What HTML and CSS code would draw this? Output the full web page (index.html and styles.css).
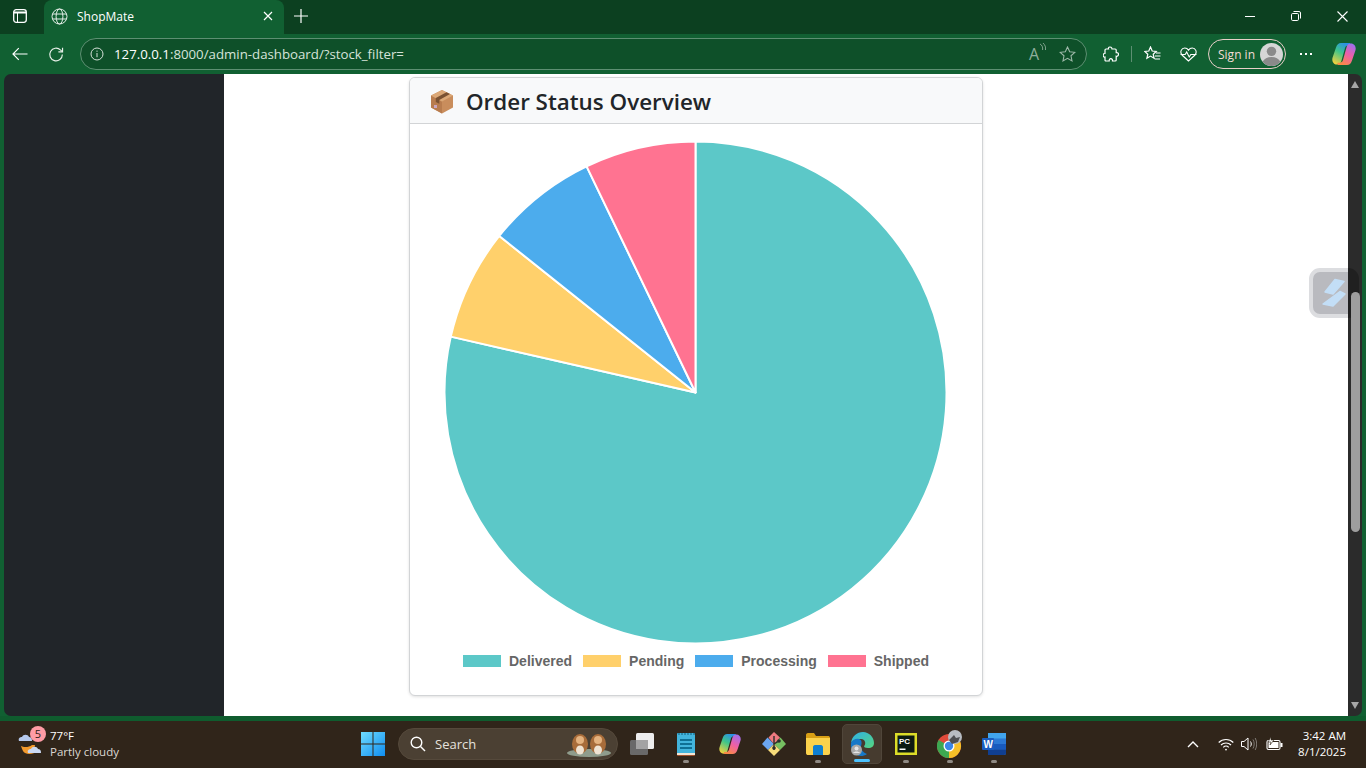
FILE: index.html
```html
<!DOCTYPE html>
<html lang="en">

<head>
    <meta charset="UTF-8">
    <meta name="viewport" content="width=device-width, initial-scale=1.0">
    <title>ShopMate</title>
    <link rel="stylesheet" href="styles.css">
</head>

<body>
    <div class="tabstrip">
        <div class="tab-actions">
            <svg width="16" height="16" viewBox="0 0 16 16" fill="none" stroke="#fff" stroke-width="1.300"><rect x="1.700" y="1.700" width="12.600" height="12.600" rx="2.500"/><path d="M1.700 4.500h12.600" stroke-width="2"/><path d="M5.500 5v9" stroke-width="1"/></svg>
        </div>
        <div class="tab">
            <svg width="17" height="17" viewBox="0 0 17 17" fill="none" stroke="#e6efe9" stroke-width="1"><circle cx="8.500" cy="8.500" r="7.500"/><ellipse cx="8.500" cy="8.500" rx="3.400" ry="7.500"/><path d="M1.400 6h14.200M1.400 11h14.200"/></svg>
            <span class="tab-title">ShopMate</span>
            <svg width="10" height="10" viewBox="0 0 10 10" stroke="#fff" stroke-width="1.200"><path d="M1 1l8 8M9 1l-8 8"/></svg>
        </div>
        <svg class="tab-new" width="14" height="14" viewBox="0 0 14 14" stroke="#fff" stroke-width="1.200"><path d="M7 0v14M0 7h14"/></svg>
        <div class="win-buttons">
            <svg width="10" height="10" viewBox="0 0 10 10" stroke="#fff" stroke-width="1"><path d="M0 5.500h10"/></svg>
            <svg width="10" height="10" viewBox="0 0 10 10" fill="none" stroke="#fff" stroke-width="1"><rect x=".5" y="2.500" width="7" height="7" rx="1.200"/><path d="M2.500 .5h5.500a1.500 1.500 0 0 1 1.500 1.500v5.500"/></svg>
            <svg width="11" height="11" viewBox="0 0 11 11" stroke="#fff" stroke-width="1.100"><path d="M.5 .5l10 10M10.500 .5l-10 10"/></svg>
        </div>
    </div>

    <div class="toolbar">
        <svg width="16" height="14" viewBox="0 0 16 14" fill="none" stroke="#fff" stroke-width="1.200"><path d="M16 7H1M7 1L1 7l6 6"/></svg>
        <svg class="reload" width="17" height="17" viewBox="0 0 17 17" fill="none" stroke="#e8efe9" stroke-width="1.200"><path d="M14.800 8.500a6.500 6.500 0 1 1-2-4.700L15 5.800"/><path d="M15 1.500v4.300h-4.300"/></svg>
        <div class="addressbar">
            <svg width="14" height="14" viewBox="0 0 14 14" fill="none" stroke="#d5e0d8" stroke-width="1"><circle cx="7" cy="7" r="6"/><path d="M7 6v4.200M7 3.600v1.200"/></svg>
            <span class="url"><b>127.0.0.1</b>:8000/admin-dashboard/?stock_filter=</span>
            <span class="read-aloud">A<svg width="7" height="9" viewBox="0 0 7 9" fill="none" stroke="#8fae9b" stroke-width=".9"><path d="M1 1c2 1 3 3 2.600 6M4 0c2 2 3 4 2.500 7"/></svg></span>
            <svg width="17" height="16" viewBox="0 0 17 16" fill="none" stroke="#9db8a8" stroke-width="1.100"><path d="M8.500 1l2.200 4.700 5.100.6-3.800 3.500 1 5.100-4.500-2.600-4.500 2.600 1-5.100L1.200 6.300l5.100-.6z"/></svg>
        </div>
        <div class="tools">
            <svg width="16" height="17" viewBox="0 0 16 17" fill="none" stroke="#fff" stroke-width="1.200"><path d="M6 1.200c1.400-.6 3 .3 3 1.800h3.200c.6 0 1 .4 1 1v2.600c1.800-.3 2.500 1 2.200 2.200-.3 1.200-1.200 1.800-2.200 1.400V14c0 .6-.4 1-1 1H9.500c.2-1.600-.7-2.300-1.700-2.300S6 13.500 6.200 15H3c-.6 0-1-.4-1-1v-3c-1.500.4-1.800-.8-1.800-1.800S1 7 2 7.300V4c0-.6.400-1 1-1h2.500c-.2-.7 0-1.500.5-1.800z"/></svg>
            <span class="tool-sep"></span>
            <svg width="17" height="16" viewBox="0 0 17 16" fill="none" stroke="#fff" stroke-width="1.200"><path d="M6.500 1l1.700 4 4 .4-3 2.800.9 4.100-3.600-2.200-3.600 2.200.9-4.100-3-2.800 4-.4zM12 7h4.500M11 10h5.500M10.500 13H16"/></svg>
            <svg class="tool-health" width="17" height="15" viewBox="0 0 17 15" fill="none" stroke="#fff" stroke-width="1.100"><path d="M8.500 14L2 8C-.5 5 1.500 1 4.700 1c1.700 0 3 .8 3.800 2.200C9.300 1.800 10.600 1 12.300 1 15.500 1 17.500 5 15 8zM.5 7.500h4.700l1.500-2.500 2.500 5 1.600-2.500h5.700"/></svg>
            <div class="signin">
                <span>Sign in</span>
                <span class="avatar">
                    <svg width="23" height="23" viewBox="0 0 22 22"><circle cx="11" cy="11" r="11" fill="#d6d6d6"/><circle cx="11" cy="8" r="4.500" fill="#8a8a8a"/><path d="M2.500 18c1.500-3 4.500-4.500 8.500-4.500s7 1.500 8.500 4.500A11 11 0 0 1 11 22a11 11 0 0 1-8.500-4z" fill="#8a8a8a"/></svg>
                </span>
            </div>
            <span class="dots"><i></i><i></i><i></i></span>
            <svg class="copilot" width="24" height="24" viewBox="0 0 24 24">
                <defs>
                    <linearGradient id="cpa" x1=".7" y1="0" x2=".2" y2="1"><stop offset="0" stop-color="#2a8fe8"/><stop offset=".45" stop-color="#3ec58a"/><stop offset="1" stop-color="#f4d13d"/></linearGradient>
                    <linearGradient id="cpb" x1=".8" y1="0" x2=".3" y2="1"><stop offset="0" stop-color="#9c6fee"/><stop offset=".5" stop-color="#ee5fa7"/><stop offset="1" stop-color="#f98a45"/></linearGradient>
                </defs>
                <path d="M9 1h8c1.500 0 2 1.200 1.300 2.200C15 3 13.500 4 13 6L9.500 18.500C9 21 7.500 22.500 5 22.500 1.500 22.500-.5 19 .6 15.500L4 5.500C5 2.500 6.500 1 9 1z" fill="url(#cpa)"/>
                <path d="M15 23H7c-1.500 0-2-1.200-1.300-2.200C9 21 10.500 20 11 18l3.500-12.500C15 3 16.500 1.500 19 1.500c3.500 0 5.500 3.500 4.400 7L20 18.500C19 21.500 17.500 23 15 23z" fill="url(#cpb)"/>
            </svg>
        </div>
    </div>

    <div class="window-body">
        <aside class="sidebar"></aside>
        <main class="main">
            <section class="card">
                <header class="card-header">
                    <svg class="box-icon" width="24" height="25" viewBox="0 0 24 25">
                        <path d="M12 1L23 6.500V18.500L12 24.500 1 18.500V6.500z" fill="#c98d5c"/>
                        <path d="M1 6.500L12 12.500V24.500L1 18.500z" fill="#b87c4e"/>
                        <path d="M12 1L23 6.500 12 12.500 1 6.500z" fill="#dba877"/>
                        <path d="M16.500 3.200L5.800 9.100V13l3.500 1.800v-3.900L20 5z" fill="#7a5232"/>
                        <rect x="4" y="16" width="3" height="3" fill="#c9a6c0"/>
                    </svg>
                    <h2 class="card-title">Order Status Overview</h2>
                </header>
                <div class="chart">
                    <svg class="pie" width="504" height="504" viewBox="-251.500 -252.500 504 504">
                        <g stroke="#fff" stroke-width="2" stroke-linejoin="round">
                            <path d="M0 0L0 -251A251 251 0 1 1 -244.700 -55.850Z" fill="#5cc8c8"/>
                            <path d="M0 0L-244.700 -55.850A251 251 0 0 1 -196.240 -156.500Z" fill="#ffd06b"/>
                            <path d="M0 0L-196.240 -156.500A251 251 0 0 1 -108.900 -226.140Z" fill="#4caced"/>
                            <path d="M0 0L-108.900 -226.140A251 251 0 0 1 0 -251Z" fill="#ff7391"/>
                        </g>
                    </svg>
                    <ul class="legend">
                        <li><span class="swatch swatch-teal"></span>Delivered</li>
                        <li><span class="swatch swatch-yellow"></span>Pending</li>
                        <li><span class="swatch swatch-blue"></span>Processing</li>
                        <li><span class="swatch swatch-pink"></span>Shipped</li>
                    </ul>
                </div>
            </section>
            <div class="float-widget">
                <svg width="26" height="30" viewBox="0 0 26 30" fill="#c3def6" stroke="#c3def6" stroke-width="1.500" stroke-linejoin="round"><path d="M14 1.500l9 2-11 12.500-8-2z"/><path d="M19 13.500l5 2.500-12 12-10-2z"/></svg>
            </div>
        </main>
        <div class="scrollbar">
            <span class="arrow-up"></span>
            <span class="thumb"></span>
            <span class="arrow-down"></span>
        </div>
    </div>

    <div class="taskbar">
        <div class="weather">
            <svg width="30" height="30" viewBox="0 0 30 30">
                <path d="M4 17c2 1 7 2 11-1l3 0c-1 3 0 5 2 6-3 3-8 4-12 2-2-1-3-4-4-7z" fill="#f39a2d"/>
                <path d="M2 12c-1-3 1-4 3-4 1-3 6-3 7 0 2 0 3 1 3 4z" fill="#b6c9ec"/>
                <path d="M11 24c-1-3 1-4 3-4 1-3 6-3 7 0 2 0 3 1 3 4z" fill="#c9d8f2"/>
            </svg>
            <span class="badge">5</span>
            <div class="weather-text">
                <span>77°F</span>
                <span class="cond">Partly cloudy</span>
            </div>
        </div>
        <div class="task-icon">
            <svg width="24" height="24" viewBox="0 0 24 24"><defs><linearGradient id="win" x1="0" y1="0" x2="1" y2="1"><stop offset="0" stop-color="#6fdcff"/><stop offset="1" stop-color="#0f8df0"/></linearGradient></defs><path d="M0 0h11.500v11.500H0zM12.500 0H24v11.500H12.500zM0 12.500h11.500V24H0zM12.500 12.500H24V24H12.500z" fill="url(#win)"/></svg>
        </div>
        <div class="searchbox">
            <svg width="16" height="16" viewBox="0 0 16 16" fill="none" stroke="#fff" stroke-width="1.400"><circle cx="6.500" cy="6.500" r="5.300"/><path d="M10.500 10.500L15 15"/></svg>
            <span class="search-label">Search</span>
            <svg width="46" height="26" viewBox="0 0 46 26">
                <ellipse cx="23" cy="22" rx="22" ry="4" fill="#8f9c8c"/>
                <ellipse cx="14" cy="13" rx="8" ry="10" fill="#a86c3a"/><ellipse cx="32" cy="13" rx="8" ry="10" fill="#a86c3a"/>
                <ellipse cx="14" cy="9" rx="4" ry="4" fill="#e4b27f"/><ellipse cx="32" cy="9" rx="4" ry="4" fill="#e4b27f"/>
                <ellipse cx="14" cy="19" rx="4" ry="4.500" fill="#efe3d3"/><ellipse cx="32" cy="19" rx="4" ry="4.500" fill="#efe3d3"/>
            </svg>
        </div>
        <div class="task-icon">
            <svg width="24" height="22" viewBox="0 0 24 22"><rect x="0" y="7" width="18" height="15" rx="1.500" fill="#696969"/><rect x="6" y="0" width="18" height="16" rx="1.500" fill="#ededed"/><rect x="6" y="7" width="12" height="9" fill="#a3a3a3"/></svg>
        </div>
        <div class="task-icon has-dot">
            <svg width="18" height="24" viewBox="0 0 18 24"><rect x="0" y="2" width="18" height="22" rx="1" fill="#a0522d"/><rect x="0" y="1" width="18" height="21" rx="1" fill="#42b4dc"/><path d="M3 8h12M3 12h12M3 16h12" stroke="#0f6f94" stroke-width="2"/><path d="M2 1v2M5 1v2M8 1v2M11 1v2M14 1v2M17 1v2" stroke="#0f5f7f" stroke-width="1"/><rect x="0" y="21" width="18" height="2" fill="#f1e6d6"/></svg>
        </div>
        <div class="task-icon">
            <svg width="22" height="22" viewBox="0 0 24 24"><path d="M9 1h8c1.500 0 2 1.200 1.300 2.200C15 3 13.500 4 13 6L9.500 18.500C9 21 7.500 22.500 5 22.500 1.500 22.500-.5 19 .6 15.500L4 5.500C5 2.500 6.500 1 9 1z" fill="url(#cpa)"/><path d="M15 23H7c-1.500 0-2-1.200-1.300-2.200C9 21 10.500 20 11 18l3.500-12.500C15 3 16.500 1.500 19 1.500c3.500 0 5.500 3.500 4.400 7L20 18.500C19 21.500 17.500 23 15 23z" fill="url(#cpb)"/></svg>
        </div>
        <div class="task-icon">
            <svg width="24" height="24" viewBox="0 0 24 24"><path d="M12 12L5.500 5.500 0 12l6 6z" fill="#6aa5f0"/><path d="M12 12l6.500-6.500L24 12l-6 6z" fill="#76c061"/><path d="M12 12l6 6-6 6-6-6z" fill="#f7dc7a"/><path d="M12 12L6.500 5.500 12 0l6 5.500z" fill="#ee7a80"/><path d="M12 4v14M12 12l5-3" stroke="#2c2c2c" stroke-width="1.400"/><circle cx="12" cy="16" r="1.800" fill="#2c2c2c"/><circle cx="17" cy="9" r="1.800" fill="#2c2c2c"/></svg>
        </div>
        <div class="task-icon has-dot">
            <svg width="24" height="22" viewBox="0 0 24 22"><path d="M0 2c0-1 .6-2 2-2h6l2 3h12c1 0 2 .6 2 2v2H0z" fill="#d89f15"/><path d="M0 5h24v15c0 1-.6 2-2 2H2c-1 0-2-.6-2-2z" fill="#fbd24c"/><path d="M7 14c0-1 .6-2 2-2h6c1 0 2 1 2 2v8H7z" fill="#0f7fd0"/></svg>
        </div>
        <div class="task-icon task-icon-active">
            <svg width="24" height="24" viewBox="0 0 24 24">
                <defs><linearGradient id="edg" x1="0" y1="0" x2="1" y2="1"><stop offset="0" stop-color="#2fb0e8"/><stop offset="1" stop-color="#55d67f"/></linearGradient></defs>
                <path d="M1 11C2 4 7 0 13 0c6 0 11 5 11 11 0 3-2 5-6 5-3 0-4-1-4-2 2-1 2-7-3-7-5 0-9 2-10 4z" fill="url(#edg)"/>
                <path d="M1 11c1-3 5-5 8-4 3 1 3 4 2 7-1 2 1 6 6 8-2 1.500-4 2-6 2C5 24 0 18 1 11z" fill="#1678c8"/>
                <circle cx="6.500" cy="18" r="5.500" fill="#a8a8a8"/><circle cx="6.500" cy="16.500" r="2" fill="#e5e5e5"/><path d="M3 21c1-2 6-2 7 0z" fill="#e5e5e5"/>
            </svg>
            <span class="active-bar"></span>
        </div>
        <div class="task-icon has-dot">
            <svg width="22" height="22" viewBox="0 0 22 22"><rect x="0" y="0" width="22" height="22" fill="#dcdc28"/><rect x="2.500" y="2.500" width="17" height="17" fill="#0c1a12"/><text x="4" y="11" class="pc-label">PC</text><rect x="4.500" y="15.500" width="6" height="1.500" fill="#fff"/></svg>
        </div>
        <div class="task-icon has-dot">
            <svg width="26" height="28" viewBox="0 0 26 28">
                <g transform="translate(0 4)">
                    <circle cx="12" cy="12" r="12" fill="#e04a3a"/>
                    <path d="M12 12L22.400 6A12 12 0 0 1 12 24z" fill="#f6c028"/>
                    <path d="M12 12L12 24A12 12 0 0 1 1.600 6z" fill="#3ca851"/>
                    <circle cx="12" cy="12" r="5.500" fill="#fff"/><circle cx="12" cy="12" r="4.200" fill="#3d87e6"/>
                </g>
                <circle cx="18" cy="7" r="7" fill="#b7bcc2"/><path d="M12 10l5-5 2 3 4-1-2 5-6 2z" fill="#4d4f52"/>
            </svg>
        </div>
        <div class="task-icon has-dot">
            <svg width="24" height="22" viewBox="0 0 24 22"><path d="M6 0h16c1 0 2 .6 2 2v18c0 1-.6 2-2 2H6z" fill="#2b78d4"/><path d="M6 0h18v5.500H6z" fill="#41a5ee"/><path d="M6 11h18v5.500H6z" fill="#185abd"/><path d="M6 16.500h18V20c0 1-.6 2-2 2H6z" fill="#103f91"/><rect x="0" y="5" width="12" height="12" rx="1" fill="#1a5dc0"/><text x="1.500" y="15" class="word-label">W</text></svg>
        </div>
        <div class="tray">
            <svg width="12" height="7" viewBox="0 0 12 7" fill="none" stroke="#fff" stroke-width="1.400"><path d="M1 6l5-5 5 5"/></svg>
            <svg class="tray-wifi" width="16" height="13" viewBox="0 0 16 13" fill="none" stroke="#fff" stroke-width="1.200"><path d="M.7 4.500c4-4 10.600-4 14.600 0M3 7c2.700-2.700 7.300-2.700 10 0M5.300 9.300c1.500-1.500 3.900-1.500 5.400 0"/><circle cx="8" cy="11.600" r=".9" fill="#fff" stroke="none"/></svg>
            <svg class="tray-vol" width="16" height="14" viewBox="0 0 16 14" fill="none" stroke="#fff" stroke-width="1"><path d="M.5 4.500h2.500L7 1v12L3 9.500H.5z"/><path d="M9.500 4.500c1 1.500 1 3.500 0 5"/><path d="M12 2.500c1.600 2.800 1.600 6.200 0 9M14.200 1c2 3.800 2 8.200 0 12" stroke="#7f7a74"/></svg>
            <svg class="tray-batt" width="17" height="14" viewBox="0 0 17 14"><rect x="1" y="3.500" width="13" height="9" rx="1.500" fill="none" stroke="#fff" stroke-width="1.100"/><rect x="2.500" y="5" width="10" height="6" fill="#fff"/><rect x="14.500" y="6" width="2" height="4" fill="#fff"/><path d="M5 0L2 5h3l-1 3 4-5H5z" fill="#fff" stroke="#30251a" stroke-width=".6"/></svg>
            <div class="clock">
                <span>3:42 AM</span>
                <span>8/1/2025</span>
            </div>
        </div>
    </div>
</body>

</html>
```

FILE: styles.css
```css
* {
    box-sizing: border-box;
}

html,
body {
    margin: 0;
    height: 768px;
    overflow: hidden;
}

body {
    display: flex;
    flex-direction: column;
    width: 1366px;
    background-color: #0f5c2e;
    font-family: "Open Sans", "Liberation Sans", sans-serif;
    color: #fff;
}

/* browser chrome */
.tabstrip {
    display: flex;
    align-items: center;
    height: 34px;
    background-color: #0c4020;
    flex-shrink: 0;
}

.tab-actions {
    display: flex;
    justify-content: center;
    width: 44px;
    height: 34px;
    padding: 8px 4px 0 0;
}

.tab {
    display: flex;
    align-items: center;
    width: 240px;
    height: 34px;
    padding: 0 11px 2px 7px;
    background-color: #116032;
    border-radius: 8px 8px 0 0;
}

.tab-title {
    flex: 1;
    margin-left: 9px;
    font-size: 12px;
}

.tab-new {
    margin: 0 0 3px 10px;
}

.win-buttons {
    display: flex;
    align-items: center;
    gap: 36px;
    margin: 0 18px 2px auto;
}

.toolbar {
    display: flex;
    align-items: center;
    height: 40px;
    padding: 0 10px 0 12px;
    background-color: #116032;
    flex-shrink: 0;
}

.reload {
    margin-left: 20px;
}

.addressbar {
    display: flex;
    align-items: center;
    width: 1007px;
    height: 32px;
    margin-left: 16px;
    padding: 0 10px 0 9px;
    border: 1px solid #5d8f72;
    border-radius: 16px;
    background-color: #0e5029;
    flex-shrink: 0;
}

.url {
    flex: 1;
    margin-left: 10px;
    font-size: 13.250px;
    color: #d6e3da;
}

.url b {
    font-weight: 400;
    color: #fff;
}

.read-aloud {
    display: flex;
    margin-right: 13px;
    font-size: 16px;
    color: #8fae9b;
}

.tools {
    display: flex;
    align-items: center;
    flex: 1;
    margin-left: 16px;
}

.tool-sep {
    width: 1px;
    height: 16px;
    margin: 0 12px;
    background-color: #5d8f72;
}

.tool-health {
    margin-left: 19px;
}

.signin {
    display: flex;
    align-items: center;
    justify-content: space-between;
    width: 78px;
    height: 30px;
    margin-left: 11px;
    padding: 0 2px 0 9px;
    border: 1px solid #e8cfc8;
    border-radius: 15px;
    font-size: 12px;
    color: #f2dcd6;
}

.avatar {
    display: flex;
}

.dots {
    display: flex;
    gap: 3px;
    margin-left: 14px;
}

.dots i {
    display: block;
    width: 2px;
    height: 2px;
    background-color: #fff;
}

.copilot {
    margin-left: 20px;
}

/* page */
.window-body {
    display: flex;
    height: 642px;
    padding: 0 4px;
    flex-shrink: 0;
    background-color: #116032;
}

.sidebar {
    width: 220px;
    background-color: #212529;
    border-radius: 7px 0 0 7px;
}

.main {
    position: relative;
    width: 1124px;
    padding: 3px 0 0 185px;
    background-color: #fff;
    overflow: hidden;
}

.card {
    width: 574px;
    height: 619px;
    background-color: #fff;
    border: 1px solid #d2d4d6;
    border-radius: 6px;
    box-shadow: 0 1px 3px rgba(0, 0, 0, 0.12);
}

.card-header {
    display: flex;
    align-items: center;
    height: 46px;
    padding: 2px 0 0 20px;
    background-color: #f8f9fa;
    border-bottom: 1px solid #d2d4d6;
    border-radius: 5px 5px 0 0;
}

.box-icon {
    margin-right: 12px;
}

.card-title {
    margin: 0;
    font-size: 22.400px;
    font-weight: 600;
    color: #212529;
}

.chart {
    display: flex;
    flex-direction: column;
    align-items: center;
    padding-top: 16px;
}

.pie {
    display: block;
}

.legend {
    display: flex;
    gap: 11px;
    margin: 9px 0 0;
    padding: 0;
    list-style: none;
    font-family: "Liberation Sans", Arial, sans-serif;
    font-size: 14px;
    font-weight: 700;
    line-height: 16px;
    color: #666;
}

.legend li {
    display: flex;
    align-items: center;
}

.swatch {
    width: 38px;
    height: 12px;
    margin-right: 8px;
}

.swatch-teal {
    background-color: #5cc8c8;
}

.swatch-yellow {
    background-color: #ffd06b;
}

.swatch-blue {
    background-color: #4caced;
}

.swatch-pink {
    background-color: #ff7391;
}

.float-widget {
    position: absolute;
    top: 194px;
    left: 1085px;
    display: flex;
    align-items: center;
    justify-content: center;
    width: 50px;
    height: 50px;
    border: 4px solid #dcdde0;
    border-radius: 11px;
    background-color: #b9babf;
}

/* scrollbar */
.scrollbar {
    position: relative;
    display: flex;
    flex-direction: column;
    align-items: center;
    width: 14px;
    background-color: #2b2b2b;
    border-radius: 0 7px 7px 0;
}

/* shade of the floating widget where it passes under the bar */
.scrollbar::before {
    content: "";
    position: absolute;
    top: 194px;
    left: 0;
    width: 11px;
    height: 50px;
    background-color: rgba(0, 0, 0, 0.25);
    border-radius: 0 11px 11px 0;
}

.arrow-up,
.arrow-down {
    width: 0;
    height: 0;
    border-left: 4.500px solid transparent;
    border-right: 4.500px solid transparent;
}

.arrow-up {
    margin-top: 7px;
    border-bottom: 7px solid #a6a6a6;
}

.arrow-down {
    margin-top: auto;
    margin-bottom: 7px;
    border-top: 7px solid #a6a6a6;
}

.thumb {
    position: relative;
    width: 9px;
    height: 240px;
    margin-top: 204px;
    background-color: #9e9e9e;
    border-radius: 5px;
}

/* taskbar */
.taskbar {
    display: flex;
    align-items: center;
    height: 47px;
    margin-top: 5px;
    padding-bottom: 1px;
    background-color: #30251a;
    flex-shrink: 0;
}

.weather {
    position: relative;
    display: flex;
    align-items: center;
    width: 351px;
    height: 46px;
    padding-left: 17px;
}

.weather-text {
    display: flex;
    flex-direction: column;
    margin-left: 3px;
    font-size: 11.500px;
    line-height: 16px;
}

.cond {
    color: #dcd8d3;
}

.badge {
    position: absolute;
    top: 5px;
    left: 30px;
    width: 16px;
    height: 16px;
    border-radius: 50%;
    background-color: #ff9ca5;
    color: #2b1e16;
    font-size: 11px;
    line-height: 16px;
    text-align: center;
}

.task-icon {
    position: relative;
    display: flex;
    align-items: center;
    justify-content: center;
    width: 44px;
    height: 46px;
}

.has-dot::after {
    content: "";
    position: absolute;
    bottom: 4px;
    left: 19px;
    width: 6px;
    height: 3px;
    border-radius: 2px;
    background-color: #8f8a84;
}

.task-icon-active {
    width: 40px;
    height: 40px;
    margin: 0 2px;
    background-color: #463b2f;
    border: 1px solid #50463a;
    border-radius: 5px;
}

.active-bar {
    position: absolute;
    bottom: 1px;
    left: 11px;
    width: 16px;
    height: 3px;
    border-radius: 2px;
    background-color: #4cc2ff;
}

.searchbox {
    display: flex;
    align-items: center;
    width: 220px;
    height: 32px;
    margin: 0 2px 0 3px;
    padding: 0 5px 0 11px;
    border-radius: 16px;
    background-color: #4b4033;
    border: 1px solid #55493b;
}

.search-label {
    flex: 1;
    margin-left: 9px;
    font-size: 13px;
    color: #e6e2dd;
}

.tray {
    display: flex;
    align-items: center;
    flex: 1;
    padding-left: 171px;
}

.tray-wifi {
    margin-left: 19px;
}

.tray-vol {
    margin-left: 7px;
}

.tray-batt {
    margin-left: 9px;
}

.clock {
    display: flex;
    flex-direction: column;
    align-items: flex-end;
    margin: 0 20px 0 auto;
    font-size: 11.500px;
    line-height: 16px;
}

.pc-label {
    font-family: "Liberation Sans", sans-serif;
    font-size: 8px;
    font-weight: 700;
    fill: #fff;
}

.word-label {
    font-family: "Liberation Sans", sans-serif;
    font-size: 10px;
    font-weight: 700;
    fill: #fff;
}
```
